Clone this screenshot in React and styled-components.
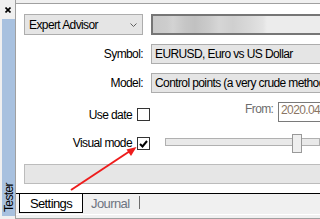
import React from 'react';
import styled, { createGlobalStyle } from 'styled-components';

const GlobalStyle = createGlobalStyle`
  html, body {
    margin: 0;
    padding: 0;
    background: #f0f0f0;
  }
  body {
    font-family: "Liberation Sans", Arial, sans-serif;
    font-size: 12px;
    letter-spacing: -0.6px;
    color: #000;
  }
`;

const Window = styled.div`
  position: relative;
  display: flex;
  width: 320px;
  height: 219px;
  overflow: hidden;
  background: #f0f0f0;
`;

const SideBar = styled.div`
  width: 16px;
  box-sizing: border-box;
  display: flex;
  flex-direction: column;
  border-right: 1px solid #a0a0a0;
`;

const CloseRow = styled.div`
  height: 19px;
  display: flex;
  align-items: flex-start;
  padding: 7px 0 0 5px;
  box-sizing: border-box;
`;

const SideTab = styled.div`
  flex: 1;
  margin: 0 0 3px 2px;
  background: #a8c1df;
  display: flex;
  align-items: flex-end;
  justify-content: center;
  padding-bottom: 4px;
`;

const SideLabel = styled.span`
  writing-mode: vertical-rl;
  transform: rotate(180deg);
  line-height: 12px;
`;

const Main = styled.div`
  flex: 1;
  display: flex;
  flex-direction: column;
  padding-top: 3px;
  min-width: 0;
`;

const Content = styled.div`
  flex: 1;
  background: #fff;
  border-top: 1px solid #a0a0a0;
  padding: 10px 0 0 8px;
  display: flex;
  flex-direction: column;
  overflow: hidden;
`;

const Row = styled.div`
  display: grid;
  grid-template-columns: 127px 169px;
  height: ${p => p.h || 20}px;
  margin-top: ${p => p.mt || 0}px;
`;

const Combo = styled.div`
  width: 119px;
  box-sizing: border-box;
  background: #e5e5e5;
  border: 1px solid #adadad;
  display: flex;
  align-items: center;
  justify-content: space-between;
  padding: 0 5px 0 4px;
`;

const BlurredBox = styled.div`
  width: 190px;
  box-sizing: border-box;
  border: 2px solid #767676;
  background: linear-gradient(
    90deg,
    #c9c9c9 0px, #cdcdcd 14px, #d3d3d3 20px, #c6c6c6 32px, #c1c1c1 42px,
    #cbcbcb 56px, #d6d6d6 66px, #cfcfcf 80px, #dadada 98px, #e3e3e3 110px,
    #ececec 114px, #ececec 100%
  );
`;

const Label = styled.div`
  justify-self: end;
  align-self: center;
  padding-right: 8px;
`;

const Field = styled.div`
  width: 190px;
  box-sizing: border-box;
  background: #e5e5e5;
  border: 1px solid #adadad;
  padding-left: 3px;
  display: flex;
  align-items: center;
  white-space: nowrap;
  overflow: hidden;
`;

const CheckCell = styled.div`
  display: flex;
  justify-content: flex-end;
  align-items: ${p => (p.bottom ? 'flex-end' : 'center')};
  gap: 5px;
  padding: 0 1px ${p => (p.bottom ? 1 : 0)}px 0;
`;

const CheckText = styled.span`
  line-height: 13px;
  margin-bottom: ${p => (p.bottom ? -1 : 0)}px;
`;

const CheckBox = styled.div`
  width: 13px;
  height: 13px;
  box-sizing: border-box;
  border: 1px solid #333;
  background: #fff;
  display: flex;
  align-items: center;
  justify-content: center;
  flex-shrink: 0;
`;

const DateCell = styled.div`
  display: grid;
  grid-template-columns: 94px 33px 60px;
  align-items: stretch;
  white-space: nowrap;
  overflow: hidden;
`;

const DateLabel = styled.span`
  grid-column: 2;
  color: #6d6d6d;
  line-height: 13px;
  padding-top: 1px;
`;

const DateBox = styled.div`
  grid-column: 3;
  box-sizing: border-box;
  border: 1px solid #7a7a7a;
  color: #8a7563;
  padding: 1px 0 0 2px;
  line-height: 13px;
  background: #fff;
  overflow: hidden;
`;

const SliderCell = styled.div`
  position: relative;
  display: flex;
  align-items: center;
  padding-left: 14px;
`;

const Track = styled.div`
  width: 180px;
  height: 8px;
  box-sizing: border-box;
  border: 1px solid #b0b0b0;
  background: #e9e9e9;
  margin-top: -3px;
`;

const Thumb = styled.div`
  position: absolute;
  left: 141px;
  top: 0;
  width: 10px;
  height: 19px;
  box-sizing: border-box;
  border: 1px solid #999;
  background: #efefef;
`;

const Progress = styled.div`
  margin-top: 11px;
  height: 20px;
  width: 310px;
  box-sizing: border-box;
  border: 1px solid #bcbcbc;
  background: #e6e6e6;
  flex-shrink: 0;
`;

const TabBar = styled.div`
  height: 26px;
  box-sizing: border-box;
  border-top: 1px solid #000;
  display: flex;
  flex-direction: column;
`;

const TabRow = styled.div`
  height: 20px;
  display: flex;
  align-items: flex-start;
  padding-left: 3px;
`;

const Tab = styled.div`
  width: ${p => (p.active ? '64px' : 'auto')};
  height: ${p => (p.active ? 19 : 18)}px;
  box-sizing: border-box;
  padding: 0 ${p => (p.active ? 0 : 8)}px;
  display: flex;
  align-items: center;
  justify-content: center;
  color: ${p => (p.active ? '#000' : '#6d7480')};
  background: ${p => (p.active ? '#fff' : 'transparent')};
  border: ${p => (p.active ? '1px solid #000' : 'none')};
  border-top: none;
  font-size: 13px;
`;

const TabSeparator = styled.div`
  width: 1px;
  height: 13px;
  margin: 2px 0 0 2px;
  background: #6d6d6d;
`;

const TabBottom = styled.div`
  height: 3px;
  border-top: 1px solid #fff;
  border-bottom: 1px solid #a0a0a0;
`;

const Overlay = styled.svg`
  position: absolute;
  left: 0;
  top: 0;
  pointer-events: none;
`;

const Chevron = () => (
  <svg width="7" height="4" viewBox="0 0 7 4">
    <polyline points="0.5,0.5 3.5,3.5 6.5,0.5" fill="none" stroke="#606060" strokeWidth="1" />
  </svg>
);

const Check = () => (
  <svg width="9" height="8" viewBox="0 0 9 8">
    <polyline points="1,4 3.5,6.5 8,1" fill="none" stroke="#000" strokeWidth="2" />
  </svg>
);

const App = () => (
  <>
    <GlobalStyle />
    <Window>
      <SideBar>
        <CloseRow>
          <svg width="6" height="6" viewBox="0 0 6 6">
            <path d="M0.5 0.5 L5.5 5.5 M5.5 0.5 L0.5 5.5" stroke="#000" strokeWidth="1.6" />
          </svg>
        </CloseRow>
        <SideTab>
          <SideLabel>Tester</SideLabel>
        </SideTab>
      </SideBar>

      <Main>
        <Content>
          <Row h={21}>
            <Combo>
              <span>Expert Advisor</span>
              <Chevron />
            </Combo>
            <BlurredBox />
          </Row>

          <Row mt={9}>
            <Label>Symbol:</Label>
            <Field>EURUSD, Euro vs US Dollar</Field>
          </Row>

          <Row mt={9}>
            <Label>Model:</Label>
            <Field>Control points (a very crude method</Field>
          </Row>

          <Row mt={9}>
            <CheckCell bottom>
              <CheckText bottom>Use date</CheckText>
              <CheckBox />
            </CheckCell>
            <DateCell>
              <DateLabel>From:</DateLabel>
              <DateBox>2020.04</DateBox>
            </DateCell>
          </Row>

          <Row mt={12} h={19}>
            <CheckCell>
              <CheckText>Visual mode</CheckText>
              <CheckBox>
                <Check />
              </CheckBox>
            </CheckCell>
            <SliderCell>
              <Track />
              <Thumb />
            </SliderCell>
          </Row>

          <Progress />
        </Content>

        <TabBar>
          <TabRow>
            <Tab active>Settings</Tab>
            <Tab>Journal</Tab>
            <TabSeparator />
          </TabRow>
          <TabBottom />
        </TabBar>
      </Main>

      <Overlay width="320" height="219" viewBox="0 0 320 219">
        <line x1="71" y1="190" x2="130" y2="151" stroke="#ee1c1c" strokeWidth="2" />
        <polygon points="136.5,147 126.5,149.5 131,156" fill="#ee1c1c" />
      </Overlay>
    </Window>
  </>
);

export default App;
